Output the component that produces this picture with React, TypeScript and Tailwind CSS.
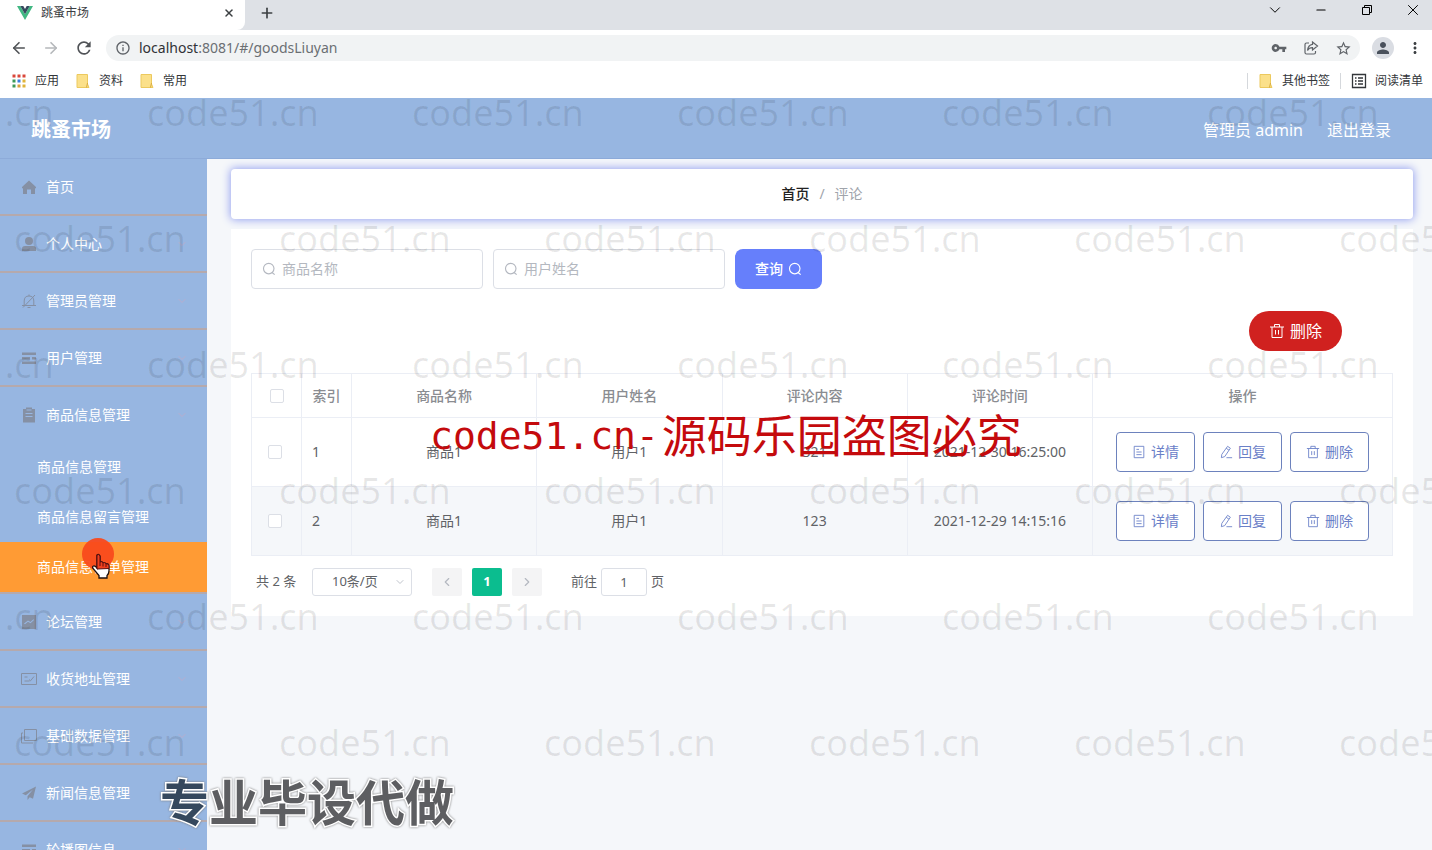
import type { ReactNode } from 'react';
import {
	ArrowLeft,
	ArrowRight,
	ChevronDown,
	ChevronLeft,
	ChevronRight,
	Minus,
	Plus,
	X,
} from 'lucide-react';
import {
	MdInfoOutline,
	MdMoreVert,
	MdPerson,
	MdRefresh,
	MdStarBorder,
	MdVpnKey,
} from 'react-icons/md';

type IconProps = { className?: string };

function Line({
	className = 'size-4',
	children,
}: {
	className?: string;
	children: ReactNode;
}) {
	return (
		<svg
			viewBox="0 0 16 16"
			className={className}
			fill="none"
			stroke="currentColor"
			strokeWidth="1"
			aria-hidden="true"
		>
			{children}
		</svg>
	);
}

function Solid({ children }: { children: ReactNode }) {
	return (
		<svg viewBox="0 0 16 16" className="size-4" fill="currentColor" aria-hidden="true">
			{children}
		</svg>
	);
}

function SearchIcon({ className }: IconProps) {
	return (
		<Line className={className}>
			<g strokeWidth="1.3">
				<circle cx="7.7" cy="7.5" r="6" />
				<path d="M11.5 12l3 2.5" />
			</g>
		</Line>
	);
}

function TrashIcon({ className }: IconProps) {
	return (
		<Line className={className}>
			<path d="M1 4h14M5.5 4V1.5h5V4M3 4v10.5h10V4M6.5 7v4.5M9.5 7v4.5" />
		</Line>
	);
}

function TicketIcon({ className }: IconProps) {
	return (
		<Line className={className}>
			<path d="M2.5 1.5h11v13h-11zM5 5h3M5 8h6M5 11h6" />
		</Line>
	);
}

function PenIcon({ className }: IconProps) {
	return (
		<Line className={className}>
			<path d="M9.8 1.5l3.2 2.2-6.5 9.6-3.8 1.2.5-3.8zM8.3 3.8l3.1 2.1M8.5 14.5H15" />
		</Line>
	);
}

function VueLogo() {
	return (
		<svg viewBox="0 0 16 14" className="h-[14px] w-4" aria-hidden="true">
			<path d="M0 0h3.3L8 8.2 12.7 0H16L8 14z" fill="#41b883" />
			<path d="M3.3 0h3L8 3l1.7-3h3L8 8.2z" fill="#35495e" />
		</svg>
	);
}

function FolderIcon() {
	return (
		<svg viewBox="0 0 14 16" className="h-4 w-[14px]" aria-hidden="true">
			<path d="M1 1.5h10.5V11l1.5 3.5H1z" fill="#fbe08a" stroke="#ecc95e" />
			<path d="M11.5 10l-1 4.5" stroke="#d9ab3d" />
		</svg>
	);
}

const appDots = [
	'#d9473a', '#d9473a', '#d9473a',
	'#3e9a58', '#3b7de0', '#e0b43a',
	'#3e9a58', '#d9a13a', '#e0b43a',
];

function AppsIcon() {
	return (
		<svg viewBox="0 0 14 14" className="size-[14px]" aria-hidden="true">
			{appDots.map((fill, i) => (
				<rect
					key={i}
					x={(i % 3) * 5 + 0.5}
					y={Math.floor(i / 3) * 5 + 0.5}
					width="3"
					height="3"
					fill={fill}
				/>
			))}
		</svg>
	);
}

function BrowserChrome() {
	return (
		<div className="shrink-0 bg-white text-[#3c4043]">
			<div className="flex h-[30px] bg-[#dee1e6]">
				<div className="flex h-full w-[245px] items-center rounded-br-lg bg-white pr-2 pb-1 pl-[17px]">
					<VueLogo />
					<span className="ml-2 flex-1 text-xs">跳蚤市场</span>
					<button aria-label="关闭标签页" className="flex size-4 items-center justify-center">
						<X className="size-3" strokeWidth={3} />
					</button>
				</div>
				<button aria-label="新标签页" className="flex w-11 items-center justify-center pb-1">
					<Plus className="size-4" strokeWidth={2.5} />
				</button>
				<div className="ml-auto flex h-5 -mr-1 text-black">
					<button aria-label="搜索标签页" className="flex w-[46px] items-center justify-center">
						<ChevronDown className="size-[18px]" strokeWidth={1.3} />
					</button>
					<button aria-label="最小化" className="flex w-[46px] items-center justify-center">
						<Minus className="size-[14px]" strokeWidth={2} />
					</button>
					<button aria-label="还原" className="flex w-[46px] items-center justify-center">
						<Line className="size-4">
							<path d="M3.5 5.5h7v7h-7zM5.5 5.500v-2h7v7h-2" />
						</Line>
					</button>
					<button aria-label="关闭" className="flex w-[46px] items-center justify-center">
						<X className="size-[18px]" strokeWidth={1.3} />
					</button>
				</div>
			</div>

			<div className="flex h-9 items-center pr-2 pl-[10px]">
				<div className="flex gap-[14px] text-[#505357]">
					<button aria-label="后退">
						<ArrowLeft className="size-[18px]" strokeWidth={2.2} />
					</button>
					<button aria-label="前进" className="text-[#b5b8bb]">
						<ArrowRight className="size-[18px]" strokeWidth={2.2} />
					</button>
					<button aria-label="刷新">
						<MdRefresh className="size-5" />
					</button>
				</div>
				<div className="ml-3 flex h-[26px] flex-1 items-center gap-2 rounded-full bg-[#f1f3f4] pr-2 pl-[9px] text-[#5f6368]">
					<MdInfoOutline className="size-4" />
					<span className="flex-1 text-sm text-[#6b6f73]">
						<span className="text-[#303236]">localhost</span>:8081/#/goodsLiuyan
					</span>
					<div className="flex gap-4">
						<button aria-label="密码">
							<MdVpnKey className="size-4" />
						</button>
						<button aria-label="分享">
							<Line className="size-4">
								<path
									d="M6 3H3.500Q2 3 2 4.500V12.500Q2 14 3.500 14H11Q12.500 14 12.500 12.500V11M9.500 2l5 4-5 4V7.700Q6 7.700 4.500 10.500 5 5 9.500 4.400z"
									strokeWidth="1.2"
								/>
							</Line>
						</button>
						<button aria-label="收藏">
							<MdStarBorder className="size-[17px]" />
						</button>
					</div>
				</div>
				<button
					aria-label="个人资料"
					className="ml-3 flex size-[22px] items-center justify-center rounded-full bg-[#dadde3] text-[#4a515c]"
				>
					<MdPerson className="size-[18px]" />
				</button>
				<button aria-label="更多" className="ml-3">
					<MdMoreVert className="size-[18px]" />
				</button>
			</div>

			<div className="flex h-8 items-center pr-[9px] pb-[3px] pl-3 text-xs text-[#33363a]">
				<a href="#apps" className="flex items-center gap-[9px]">
					<AppsIcon />
					应用
				</a>
				<a href="#docs" className="ml-[17px] flex items-center gap-[9px]">
					<FolderIcon />
					资料
				</a>
				<a href="#common" className="ml-[17px] flex items-center gap-[9px]">
					<FolderIcon />
					常用
				</a>
				<a
					href="#others"
					className="ml-auto flex h-4 items-center gap-[9px] border-l border-[#d5d8dc] pl-[11px]"
				>
					<FolderIcon />
					其他书签
				</a>
				<a
					href="#reading"
					className="ml-[10px] flex h-4 items-center gap-2 border-l border-[#d5d8dc] pl-[10px]"
				>
					<Line className="size-4">
						<path d="M1.500 1.500h13v13h-13zM4 5h1.500M7 5h5M4 8h1.500M7 8h5M4 11h1.500M7 11h5" strokeWidth="1.3" />
					</Line>
					阅读清单
				</a>
			</div>
		</div>
	);
}

type MenuItem = { label: string; icon: ReactNode; children?: string[]; leaf?: boolean };

const menu: MenuItem[] = [
	{
		label: '首页',
		leaf: true,
		icon: (
			<Solid>
				<path d="M8 1.500L15 8v1.200h-1V15H10v-4.500H6V15H2V9.200H1V8z" />
			</Solid>
		),
	},
	{
		label: '个人中心',
		icon: (
			<Solid>
				<circle cx="8" cy="5" r="4" />
				<path d="M1 15v-2.200Q1 10 4 10h8q3 0 3 2.800V15z" />
			</Solid>
		),
	},
	{
		label: '管理员管理',
		icon: (
			<Line>
				<path d="M3.200 12.500V8Q3.200 3 8 3t4.800 5v4.500M1 12.500h14M6.500 14.500h3M8 3V1.500M2 14.500L14 2" />
			</Line>
		),
	},
	{
		label: '用户管理',
		icon: (
			<Solid>
				<path d="M1 2.500h14V5H1zM1 7h8v2.500H1zM11 7h4v2.500h-4zM1 11.500h14V14H1z" />
			</Solid>
		),
	},
	{
		label: '商品信息管理',
		icon: (
			<Solid>
				<path
					fillRule="evenodd"
					d="M2 2h3V.500h6V2h3v13.500H2zM4.500 6v1h7V6zM4.500 9v1h7V9zM5.500 2.500h5v1h-5z"
				/>
			</Solid>
		),
		children: ['商品信息管理', '商品信息留言管理', '商品信息订单管理'],
	},
	{
		label: '论坛管理',
		icon: (
			<Solid>
				<path fillRule="evenodd" d="M1 1h14v14H1zM3 9.500l1 .800 3-2.500 2.500 1.500L13 6l-.600-.800-3 2.700L7 6.500z" />
			</Solid>
		),
	},
	{
		label: '收货地址管理',
		icon: (
			<Line>
				<path d="M.500 2.500h15v11H.500zM3.500 6h3M3.500 10h5M8 8.500l1.500 1.300L13 5.500" />
			</Line>
		),
	},
	{
		label: '基础数据管理',
		icon: (
			<Line>
				<path d="M3.500 1.500h12v11h-12zM.500 5v10h11.500M.500 5h1.500" />
			</Line>
		),
	},
	{
		label: '新闻信息管理',
		icon: (
			<Solid>
				<path d="M15 1.500L1 8.500l3.800 1.800L12 4.500l-5.500 6.800V15l2.200-2.700 3.300 1.500z" />
			</Solid>
		),
	},
	{
		label: '轮播图信息',
		icon: (
			<Solid>
				<path d="M1 2.500h14V5H1zM1 7h8v2.500H1zM11 7h4v2.500h-4zM1 11.500h14V14H1z" />
			</Solid>
		),
	},
];

function Sidebar() {
	return (
		<nav className="w-[207px] shrink-0 overflow-hidden bg-[#97b6e1] text-sm text-white">
			{menu.map((item) => (
				<div key={item.label} className="border-b-2 border-[#b5a9ac]">
					<a href="#menu" className="flex h-[55px] items-center pr-[19px] pl-[21px]">
						<span className="text-[#8590a4]">{item.icon}</span>
						<span className="ml-[9px] flex-1">{item.label}</span>
						{!item.leaf && <ChevronDown className="size-3 text-[#c3a9c6]" strokeWidth={1.5} />}
					</a>
					{item.children?.map((child, i) => (
						<a
							key={child}
							href="#goods"
							className={
								i === 2
									? 'flex h-[50px] items-center bg-[#ff9b34] pl-[37px]'
									: 'flex h-[50px] items-center pl-[37px]'
							}
						>
							{child}
						</a>
					))}
				</div>
			))}
		</nav>
	);
}

function SearchField({ label }: { label: string }) {
	return (
		<label className="flex h-10 w-[232px] items-center gap-[6px] rounded border border-[#dcdfe6] pl-[10px] text-[#b4b8c0]">
			<SearchIcon className="size-[14px] shrink-0" />
			<input
				aria-label={label}
				placeholder={label}
				className="w-full text-sm outline-none placeholder:text-[#b4b8c0]"
			/>
		</label>
	);
}

function CheckBox({ label }: { label: string }) {
	return (
		<input
			type="checkbox"
			aria-label={label}
			className="block size-[14px] appearance-none rounded-xs border border-[#dcdfe6] bg-white"
		/>
	);
}

const rows = [
	{ id: 1, goods: '商品1', user: '用户1', content: '321', time: '2021-12-30 16:25:00' },
	{ id: 2, goods: '商品1', user: '用户1', content: '123', time: '2021-12-29 14:15:16' },
];

const actions = [
	{ label: '详情', icon: <TicketIcon className="size-[14px]" /> },
	{ label: '回复', icon: <PenIcon className="size-[14px]" /> },
	{ label: '删除', icon: <TrashIcon className="size-[14px]" /> },
];

function CommentTable() {
	return (
		<table className="mt-[22px] w-full table-fixed border-collapse text-center text-sm text-[#606266] [&_td]:border [&_td]:border-[#ebeef5] [&_th]:border [&_th]:border-[#ebeef5]">
			<colgroup>
				<col className="w-[50px]" />
				<col className="w-[50px]" />
				<col />
				<col />
				<col />
				<col />
				<col className="w-[300px]" />
			</colgroup>
			<thead>
				<tr className="h-11 text-[#8a8c91]">
					<th className="pl-[18px]">
						<CheckBox label="全选" />
					</th>
					<th className="font-medium">索引</th>
					<th className="font-medium">商品名称</th>
					<th className="font-medium">用户姓名</th>
					<th className="font-medium">评论内容</th>
					<th className="font-medium">评论时间</th>
					<th className="font-medium">操作</th>
				</tr>
			</thead>
			<tbody>
				{rows.map((row) => (
					<tr key={row.id} className="h-[69px] even:bg-[#f5f7fa]">
						<td className="pl-4">
							<CheckBox label={`选择第${row.id}行`} />
						</td>
						<td className="pl-[10px] text-left">{row.id}</td>
						<td>{row.goods}</td>
						<td>{row.user}</td>
						<td>{row.content}</td>
						<td>{row.time}</td>
						<td>
							<div className="flex justify-center gap-2">
								{actions.map((action) => (
									<button
										key={action.label}
										className="flex h-10 w-[79px] items-center justify-center gap-[5px] rounded border border-[#6d82bd] bg-white text-[#6a80c8]"
									>
										{action.icon}
										{action.label}
									</button>
								))}
							</div>
						</td>
					</tr>
				))}
			</tbody>
		</table>
	);
}

function Pagination() {
	return (
		<div className="mt-3 flex h-7 items-center pl-[5px] text-[13px] text-[#606266]">
			<span className="w-14">共 2 条</span>
			<div className="relative">
				<select
					aria-label="每页条数"
					className="block h-7 w-[100px] appearance-none rounded-[3px] border border-[#dcdfe6] bg-white pl-[19px] outline-none"
				>
					<option>10条/页</option>
				</select>
				<ChevronDown
					className="pointer-events-none absolute top-2 right-[6px] size-3 text-[#c0c4cc]"
					strokeWidth={2}
				/>
			</div>
			<div className="ml-5 flex gap-[10px]">
				<button
					aria-label="上一页"
					className="flex h-7 w-[30px] items-center justify-center rounded-xs bg-[#f4f4f5] text-[#b4b8c0]"
				>
					<ChevronLeft className="size-[14px]" />
				</button>
				<button className="h-7 w-[30px] rounded-xs bg-[#0bbd8f] font-bold text-white">1</button>
				<button
					aria-label="下一页"
					className="flex h-7 w-[30px] items-center justify-center rounded-xs bg-[#f4f4f5] text-[#b4b8c0]"
				>
					<ChevronRight className="size-[14px]" />
				</button>
			</div>
			<label className="ml-[29px] flex items-center gap-1">
				前往
				<input
					defaultValue="1"
					className="h-7 w-[46px] rounded-[3px] border border-[#dcdfe6] text-center outline-none"
				/>
				页
			</label>
		</div>
	);
}

function Watermarks() {
	return (
		<div
			aria-hidden="true"
			className="pointer-events-none absolute inset-0 overflow-hidden text-4xl leading-[126px] text-black/9"
		>
			<div className="-mt-12">
				{[0, 1, 2, 3, 4, 5].map((row) => (
					<div
						key={row}
						className={row % 2 ? 'ml-[14px] flex h-[126px]' : '-ml-[118px] flex h-[126px]'}
					>
						{[0, 1, 2, 3, 4, 5].map((col) => (
							<span key={col} className="w-[265px] shrink-0">
								code51.cn
							</span>
						))}
					</div>
				))}
			</div>
		</div>
	);
}

function HandPointer() {
	return (
		<div aria-hidden="true" className="pointer-events-none absolute top-[440px] left-[82px]">
			<div className="size-8 rounded-full bg-[#f94a1c]/95" />
			<svg viewBox="0 0 20 26" className="absolute top-[15px] left-[9px] h-[26px] w-5">
				<path
					d="M6 2Q8 .500 9 3v6q2-1 3 .800 2-.800 3 1 2.500-.500 3 2v5q0 3-2 4.700V25H8v-2.500L2 15.500q-1-2 .500-2.500Q4 12.500 6 15z"
					fill="#fff"
					stroke="#1c1010"
					strokeWidth="1.300"
				/>
				<path d="M6 2Q8 .500 9 3v6q2-1 3 .800 2-.800 3 1 2.500-.500 3 2v2.700L6 16z" fill="#f0401f" stroke="#5c0d0d" />
				<path d="M9 9v4M12 10v3.500M15 11v3" stroke="#5c0d0d" />
			</svg>
		</div>
	);
}

export default function App() {
	return (
		<div className="flex h-screen flex-col overflow-hidden bg-[#f5f7fa] font-['Noto_Sans','Noto_Sans_CJK_SC',sans-serif]">
			<BrowserChrome />
			<div className="relative flex min-h-0 flex-1 flex-col overflow-hidden">
				<header className="flex h-[61px] shrink-0 items-center border-b border-[#8dabd9] bg-[#97b6e1] pt-1 pr-[41px] pl-[31px] text-white">
					<h1 className="flex-1 text-xl font-bold">跳蚤市场</h1>
					<span>管理员 admin</span>
					<a href="#logout" className="ml-6">
						退出登录
					</a>
				</header>
				<div className="flex min-h-0 flex-1">
					<Sidebar />
					<main className="min-w-0 flex-1 pt-[10px] pr-[19px] pl-6">
						<div className="flex h-[50px] items-center justify-center gap-[10px] rounded bg-white text-sm text-[#a0a4ab] shadow-[0_0_8px_1px_#98a4f0]">
							<a href="#home" className="font-medium text-[#222]">
								首页
							</a>
							<span>/</span>
							<span>评论</span>
						</div>
						<section className="mt-[10px] bg-white p-5">
							<div className="flex gap-[10px]">
								<SearchField label="商品名称" />
								<SearchField label="用户姓名" />
								<button className="flex h-10 w-[87px] items-center justify-center gap-[5px] rounded-lg bg-[#667ffb] text-sm font-medium text-white">
									查询
									<SearchIcon className="size-[14px]" />
								</button>
							</div>
							<div className="mt-[22px] mr-[51px] flex justify-end">
								<button className="flex h-10 w-[93px] items-center justify-center gap-[5px] rounded-[20px] bg-[#d0211f] text-white">
									<TrashIcon className="size-4" />
									删除
								</button>
							</div>
							<CommentTable />
							<Pagination />
						</section>
					</main>
				</div>

				<Watermarks />
				<p className="pointer-events-none absolute top-[304px] left-[430px] flex h-[68px] items-center whitespace-nowrap text-[45px] text-[#c40a0d]">
					<span className="font-['DejaVu_Sans_Mono',monospace] text-[38px]">code51.cn-</span>
					<span className="ml-[3px]">源码乐园盗图必究</span>
				</p>
				<p className="pointer-events-none absolute bottom-3 left-40 text-[49px] leading-[72px] font-bold whitespace-nowrap text-[#5d5e61] [paint-order:stroke] [-webkit-text-stroke:3px_#fff] drop-shadow-[0_0_1px_#777]">
					<span className="text-[#35485d]">专</span>业毕设代做
				</p>
				<HandPointer />
			</div>
		</div>
	);
}
